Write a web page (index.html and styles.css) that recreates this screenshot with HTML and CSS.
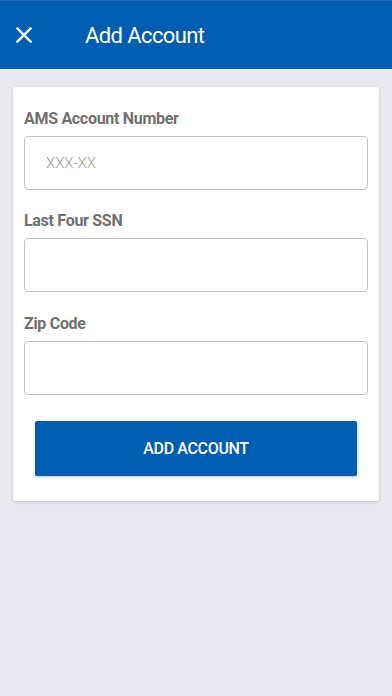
FILE: index.html
```html
<!DOCTYPE html>
<html>
<head>
    <meta http-equiv="Content-Type" content="text/html; charset=utf-8">
    <title>Add Account</title>
    <link rel="stylesheet" href="styles.css">
</head>
<body>
    <div class="header">
        <span class="close">
            <svg width="16" height="16" viewBox="0 0 16 16"><path d="M1.5 1.5L14.5 14.5M14.5 1.5L1.5 14.5" stroke="#fff" stroke-width="2.4" stroke-linecap="square"/></svg>
        </span>
        <h1>Add Account</h1>
    </div>
    <div class="card">
        <label>AMS Account Number</label>
        <input type="text" placeholder="XXX-XX" />
        <label>Last Four SSN</label>
        <input type="text" />
        <label class="last">Zip Code</label>
        <input type="text" />
        <div class="btn">ADD ACCOUNT</div>
    </div>
</body>
</html>
```

FILE: styles.css
```css
body,h1,div,label,input{margin:0;padding:0;border:0;}
body{font-family:Roboto, "Liberation Sans", sans-serif; background:#e9e9ef; width:392px; height:696px;}

.header{height:69px; background:#005db0; border-top:1px solid #1f6fbe; box-sizing:border-box; display:flex; align-items:center;}
.header .close{width:16px; height:16px; margin-left:16px; display:flex;}
.header h1{color:#fff; font-size:22px; font-weight:400; letter-spacing:-0.6px; margin-left:53px; margin-top:1px;}

.card{margin:18px 13px 0; background:#fff; padding:22px 11px 25px; display:flex; flex-direction:column;
    box-shadow:0 1px 3px rgba(0,0,0,0.18); border-radius:2px;}
.card label{font-size:16px; line-height:20px; font-weight:700; color:#707070; letter-spacing:-0.3px;}
.card label.last{margin-top:1px;}
.card input{height:54px; border:1px solid #c2c2c2; border-radius:4px; margin:7px 0 21px; box-sizing:border-box;
    padding-left:21px; font-family:Roboto, sans-serif; font-size:15px; font-weight:300; color:#333; background:#fff;}
.card input::placeholder{color:#9a9a9a;}
.btn{margin:5px 11px 0; height:55px; background:#005db0; color:#fff; font-size:16px; font-weight:500; letter-spacing:-0.35px;
    display:flex; align-items:center; justify-content:center; border-radius:2px; box-shadow:0 1px 3px rgba(0,0,0,0.25);}
```
